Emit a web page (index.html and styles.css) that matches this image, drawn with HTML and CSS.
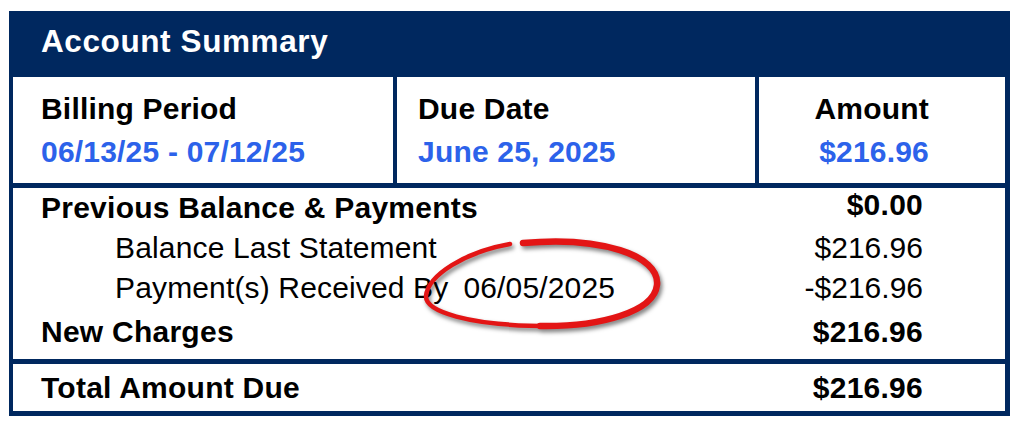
FILE: index.html
```html
<!DOCTYPE html>
<html>
<head>
<meta charset="utf-8">
<link rel="stylesheet" href="styles.css">
</head>
<body>
<div class="card">
  <div class="header">Account Summary</div>
  <div class="top-grid">
    <div class="cell cell-period">
      <div class="label">Billing Period</div>
      <div class="value">06/13/25 - 07/12/25</div>
    </div>
    <div class="cell cell-due">
      <div class="label">Due Date</div>
      <div class="value">June 25, 2025</div>
    </div>
    <div class="cell cell-amount">
      <div class="label">Amount</div>
      <div class="value">$216.96</div>
    </div>
  </div>
  <div class="details">
    <div class="row">
      <span class="bold">Previous Balance &amp; Payments</span>
      <span class="amt bold amt-top">$0.00</span>
    </div>
    <div class="row">
      <span class="indent">Balance Last Statement</span>
      <span class="amt">$216.96</span>
    </div>
    <div class="row">
      <span class="indent">Payment(s) Received By<span class="date">06/05/2025</span></span>
      <span class="amt">-$216.96</span>
    </div>
    <div class="row row-last">
      <span class="bold">New Charges</span>
      <span class="amt bold">$216.96</span>
    </div>
    <svg class="circle" width="260" height="110" viewBox="0 0 260 110">
      <path class="stroke-thick" d="M108,13 C185,6 245,25 242,55 C239,82 185,97 125,96"/>
      <path class="stroke-thin" d="M125,96 C55,95 10,82 11,66 C13,45 50,22 95,14"/>
    </svg>
  </div>
  <div class="total">
    <span class="bold">Total Amount Due</span>
    <span class="amt bold">$216.96</span>
  </div>
</div>
</body>
</html>
```

FILE: styles.css
```css
* { box-sizing: border-box; }
body {
  margin: 0;
  background: #ffffff;
  font-family: "Liberation Sans", Arial, sans-serif;
  color: #000;
}
.card {
  margin: 11px 0 0 9px;
  width: 1001px;
  border-style: solid;
  border-color: #00285f;
  border-width: 0 5px 5px 4px;
  background: #00285f;
}
.header {
  background: #00285f;
  color: #fff;
  font-weight: bold;
  font-size: 31.5px;
  line-height: 61px;
  height: 66px;
  padding-left: 28px;
  letter-spacing: 0.6px;
}
.top-grid {
  display: grid;
  grid-template-columns: 380px 358px 246px;
  column-gap: 4px;
  background: #00285f;
  margin-bottom: 5px;
}
.cell {
  background: #fff;
  height: 106px;
  padding: 10px 0;
  font-size: 30px;
  font-weight: bold;
  line-height: 43px;
  letter-spacing: 0.2px;
}
.cell-period { padding-left: 28px; }
.cell-due { padding-left: 21px; }
.cell-amount { text-align: right; padding-right: 76px; }
.value { color: #2c62ea; }
.details {
  position: relative;
  background: #fff;
  height: 171px;
  padding: 0 82px 0 28px;
  font-size: 30px;
  line-height: 40px;
  margin-bottom: 5px;
}
.row {
  display: flex;
  justify-content: space-between;
}
.row-last { margin-top: 4px; }
.amt-top { position: relative; top: -3px; }
.bold { font-weight: bold; letter-spacing: 0.25px; }
.indent { padding-left: 74px; letter-spacing: 0.15px; }
.date { margin-left: 15px; }
.total {
  display: flex;
  justify-content: space-between;
  background: #fff;
  height: 47px;
  padding: 0 82px 0 28px;
  font-size: 30px;
  line-height: 47px;
}
.circle {
  position: absolute;
  left: 402px;
  top: 42px;
  overflow: visible;
  filter: drop-shadow(2px 3px 2px rgba(0,0,0,0.5));
}
.circle path {
  fill: none;
  stroke: #e31515;
  stroke-linecap: round;
}
.stroke-thick { stroke-width: 6.5; }
.stroke-thin { stroke-width: 4.5; }
```
